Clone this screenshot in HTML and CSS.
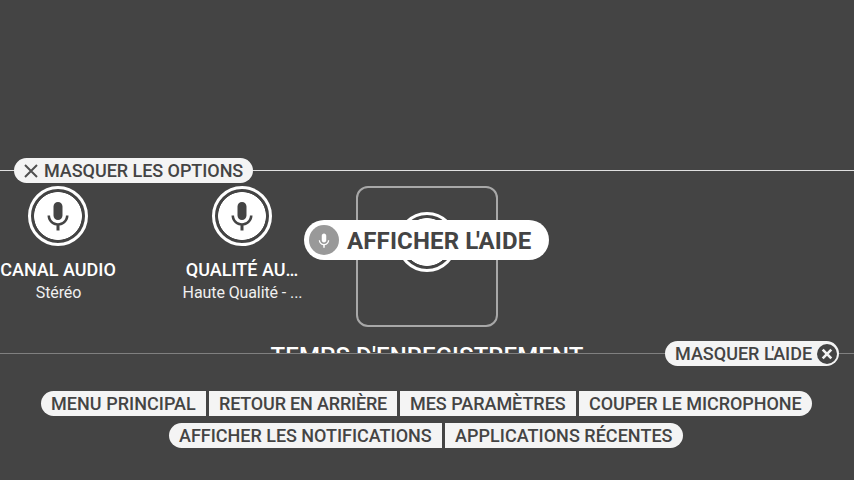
FILE: index.html
```html
<!DOCTYPE html>
<html lang="fr">
<head>
<meta charset="utf-8">
<title>Options</title>
<link rel="stylesheet" href="styles.css">
</head>
<body>
<svg class="defs" width="0" height="0" aria-hidden="true">
  <symbol id="mic" viewBox="0 0 24 24"><path d="M12 14c1.66 0 2.99-1.34 2.99-3L15 5c0-1.66-1.34-3-3-3S9 3.34 9 5v6c0 1.66 1.34 3 3 3zm5.3-3c0 3-2.54 5.1-5.3 5.1S6.7 14 6.7 11H5c0 3.41 2.72 6.23 6 6.72V21h2v-3.28c3.28-.48 6-3.3 6-6.72h-1.7z"/></symbol>
</svg>
<main class="stage">
  <div class="divider">
    <span class="rule rule-short"></span>
    <button class="pill pill-options"><svg class="cross" viewBox="0 0 14 14"><path d="M1 1l12 12M13 1L1 13"/></svg>MASQUER LES OPTIONS</button>
    <span class="rule"></span>
  </div>
  <section class="options">
    <article class="option">
      <span class="mic"><svg><use href="#mic"/></svg></span>
      <h2>CANAL AUDIO</h2>
      <p>Stéréo</p>
    </article>
    <article class="option">
      <span class="mic"><svg><use href="#mic"/></svg></span>
      <h2>QUALITÉ AU…</h2>
      <p>Haute Qualité - ...</p>
    </article>
    <article class="option selected">
      <div class="card">
        <span class="mic"><svg><use href="#mic"/></svg></span>
        <button class="hint"><span class="hint-mic"><svg><use href="#mic"/></svg></span><span class="hint-label">AFFICHER <span class="kern">L</span>'AIDE</span></button>
      </div>
      <h2>TEMPS D'ENREGISTREMENT</h2>
    </article>
  </section>
</main>
<footer class="help">
  <div class="divider help-divider">
    <span class="rule"></span>
    <button class="pill pill-close"><span>MASQUER <span class="kern">L</span>'AIDE</span><svg class="close" viewBox="0 0 20 20"><circle cx="10" cy="10" r="10"/><path d="M5.7 5.7l8.6 8.6M14.3 5.7l-8.6 8.6"/></svg></button>
    <span class="rule rule-end"></span>
  </div>
  <nav class="commands">
    <div class="group"><button class="home">MENU PRINCIPAL</button><button class="back">RETOUR EN ARRIÈRE</button><button class="settings">MES PARAMÈTRES</button><button class="mute">COUPER LE MICROPHONE</button></div>
    <div class="group"><button class="notifications">AFFICHER LES NOTIFICATIONS</button><button class="recent">APPLICATIONS RÉCENTES</button></div>
  </nav>
</footer>
</body>
</html>
```
FILE: styles.css
```css
* { box-sizing: border-box; }
body {
  margin: 0;
  height: 480px;
  overflow: hidden;
  background: #444;
  color: #fff;
  font-family: Roboto, sans-serif;
}
.defs { display: block; position: absolute; }
button {
  border: 0;
  margin: 0;
  font: 500 18px/25px Roboto, sans-serif;
  color: #444;
  background: #f4f4f4;
  white-space: nowrap;
}
.stage { height: 353px; padding-top: 158px; overflow: hidden; }
.divider { display: flex; align-items: center; height: 25px; }
.rule { flex: 1; height: 1px; background: #e0e0e0; }
.rule-short { flex: 0 0 14px; }
.pill {
  display: flex;
  align-items: center;
  height: 25px;
  padding: 0 10px;
  border-radius: 13px;
}
.pill-options { width: 239px; letter-spacing: -0.05px; }
.kern { letter-spacing: -2.4px; }
.cross { flex: none; width: 14px; height: 14px; margin-right: 6px; fill: none; stroke: #505050; stroke-width: 2; }
.options { display: flex; margin: 3px 0 0 -34px; }
.option { flex: 0 0 184px; min-width: 0; display: flex; flex-direction: column; align-items: center; }
.option h2 { margin: 12px 0 0; font: 500 18px/24px Roboto, sans-serif; white-space: nowrap; }
.option p { margin: 0; padding-left: 1px; font-size: 16px; line-height: 22px; letter-spacing: -0.1px; color: #f0f0f0; }
.mic {
  flex: none;
  display: flex;
  align-items: center;
  justify-content: center;
  width: 60px;
  height: 60px;
  border: 3px solid #fff;
  border-radius: 50%;
  background: radial-gradient(circle, #fff 23.5px, #444 24.2px);
  fill: #444;
}
.mic svg { width: 36px; height: 36px; margin-top: 2px; }
.option.selected { flex-basis: 186px; }
.card {
  position: relative;
  display: flex;
  justify-content: center;
  width: 142px;
  height: 141px;
  padding-top: 24px;
  border: 2px solid #a8a8a8;
  border-radius: 12px;
}
.hint {
  position: absolute;
  left: -54px;
  top: 32px;
  display: flex;
  align-items: center;
  gap: 8px;
  width: 245px;
  height: 40px;
  padding: 0 5px;
  border-radius: 20px;
  background: #fff;
  font-size: 24px;
  font-weight: 700;
}
.hint-label { padding-top: 2px; letter-spacing: 0.15px; }
.hint-mic {
  display: flex;
  align-items: center;
  justify-content: center;
  width: 30px;
  height: 30px;
  border-radius: 50%;
  background: #999;
  fill: #fff;
}
.hint-mic svg { width: 18px; height: 18px; margin-top: 1px; }
.selected h2 { margin-top: 14px; font-size: 24px; line-height: 30px; letter-spacing: 0.1px; }
.help { height: 127px; }
.help-divider { margin-top: -12px; }
.help-divider .rule { background: #808080; }
.help-divider .rule-end { flex: 0 0 15px; }
.pill-close { width: 174px; justify-content: space-between; padding-right: 2px; }
.close { flex: none; width: 20px; height: 20px; fill: #444; }
.close path { stroke: #f4f4f4; stroke-width: 2.6; }
.commands { margin: 25px 1px 0 0; }
.group { display: flex; justify-content: center; gap: 3px; margin-bottom: 7px; }
.group + .group { margin-right: 1px; }
.group button { height: 25px; padding: 0 0 0 10px; text-align: left; }
.group button:first-child { border-radius: 13px 0 0 13px; }
.group button:last-child { border-radius: 0 13px 13px 0; }
.home { width: 165px; letter-spacing: 0.04px; }
.back { width: 188px; letter-spacing: -0.18px; }
.settings { width: 176px; letter-spacing: -0.03px; }
.mute { width: 233px; letter-spacing: -0.05px; }
.notifications { width: 273px; letter-spacing: -0.02px; }
.recent { width: 238px; letter-spacing: 0.03px; }
```
